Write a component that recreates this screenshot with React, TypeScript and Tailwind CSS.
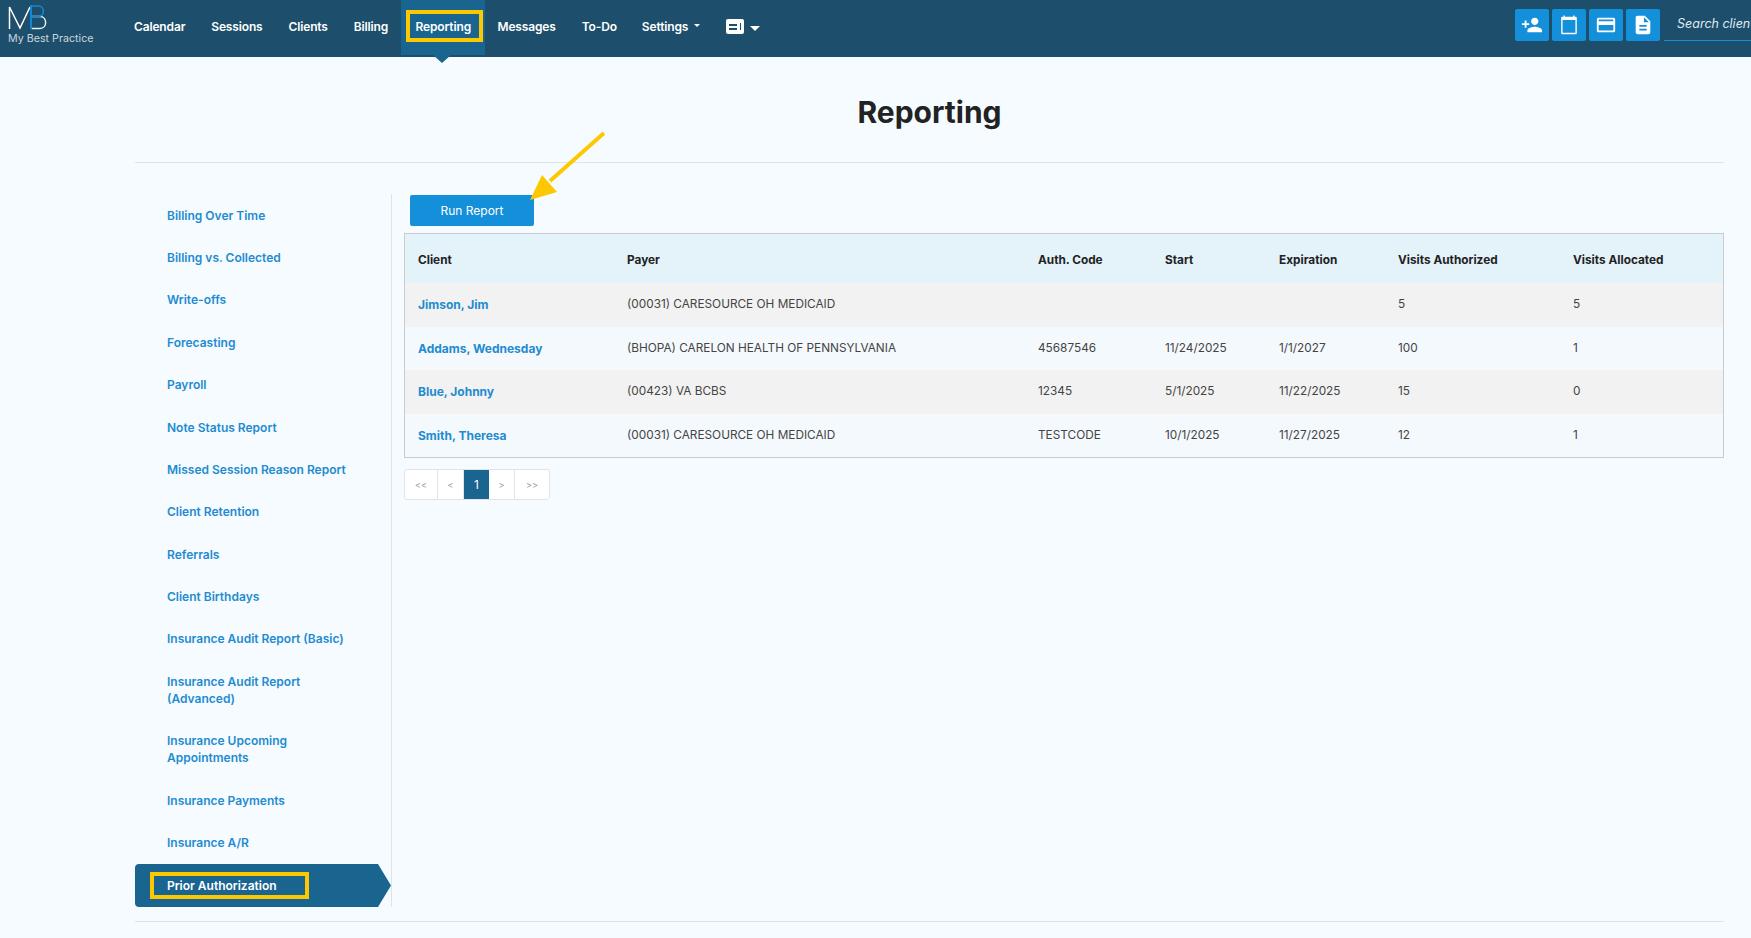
import React from "react";

const FONT = "font-['Inter','Open_Sans',sans-serif]";

const navLinks = ["Calendar", "Sessions", "Clients", "Billing", "Reporting", "Messages", "To-Do"];

const reports = [
  "Billing Over Time",
  "Billing vs. Collected",
  "Write-offs",
  "Forecasting",
  "Payroll",
  "Note Status Report",
  "Missed Session Reason Report",
  "Client Retention",
  "Referrals",
  "Client Birthdays",
  "Insurance Audit Report (Basic)",
  "Insurance Audit Report (Advanced)",
  "Insurance Upcoming Appointments",
  "Insurance Payments",
  "Insurance A/R",
];

const rows = [
  { client: "Jimson, Jim", payer: "(00031) CARESOURCE OH MEDICAID", code: "", start: "", exp: "", auth: "5", alloc: "5" },
  { client: "Addams, Wednesday", payer: "(BHOPA) CARELON HEALTH OF PENNSYLVANIA", code: "45687546", start: "11/24/2025", exp: "1/1/2027", auth: "100", alloc: "1" },
  { client: "Blue, Johnny", payer: "(00423) VA BCBS", code: "12345", start: "5/1/2025", exp: "11/22/2025", auth: "15", alloc: "0" },
  { client: "Smith, Theresa", payer: "(00031) CARESOURCE OH MEDICAID", code: "TESTCODE", start: "10/1/2025", exp: "11/27/2025", auth: "12", alloc: "1" },
];

const iconPaths = [
  "M15 12c2.21 0 4-1.79 4-4s-1.79-4-4-4-4 1.79-4 4 1.79 4 4 4zm-9-2V7H4v3H1v2h3v3h2v-3h3v-2H6zm9 4c-2.67 0-8 1.34-8 4v2h16v-2c0-2.66-5.33-4-8-4z",
  "M6 1.5h1.5V3h9V1.5H18V3h1.5c.6 0 1 .4 1 1v17c0 .6-.4 1-1 1h-15c-.6 0-1-.4-1-1V4c0-.6.4-1 1-1H6V1.5zM5 6.5V20.5h14V6.5H5z",
  "M20 4H4c-1.11 0-1.99.89-1.99 2L2 18c0 1.11.89 2 2 2h16c1.11 0 2-.89 2-2V6c0-1.11-.89-2-2-2zm0 14H4v-6h16v6zm0-10H4V6h16v2z",
  "M14 2H6c-1.1 0-1.99.9-1.99 2L4 20c0 1.1.89 2 1.99 2H18c1.1 0 2-.9 2-2V8l-6-6zm2 16H8v-2h8v2zm0-4H8v-2h8v2zm-3-5V3.5L18.5 9H13z",
];

function Logo() {
  return (
    <div className="flex w-[121px] flex-col pl-2 pt-[4px]">
      <svg width="40" height="27" viewBox="0 0 40 27" fill="none">
        <path d="M1.5 25V3L12 24L22 3" stroke="#ffffff" strokeWidth="1.5" />
        <path d="M24 12.5H32C39.5 12.5 39.5 24.5 32 24.5H23" stroke="#e7f2f8" strokeWidth="1.5" />
        <path d="M23 1V25" stroke="#1487d4" strokeWidth="2" />
        <path d="M23 2H30.5C37 2 37 12.5 30.5 12.5H23" stroke="#1487d4" strokeWidth="1.6" />
      </svg>
      <span className="mt-[1px] whitespace-nowrap text-[10.7px] leading-[13px] text-[#c9d6de]">My Best Practice</span>
    </div>
  );
}

function Nav() {
  return (
    <nav className="flex h-[57px] items-start overflow-hidden bg-[#1d4e6b]">
      <Logo />
      <ul className="flex h-[57px]">
        {navLinks.map((l) => (
          <li
            key={l}
            className={
              l === "Reporting"
                ? "relative mr-[-1px] flex h-[55px] items-center bg-[#1a6490] px-[14.5px] pb-[2px] text-[12px] font-semibold tracking-[-0.15px] text-white"
                : "flex h-[53px] items-center px-[13px] text-[12px] font-semibold tracking-[-0.15px] text-white"
            }
          >
            {l}
            {l === "Reporting" && (
              <div className="absolute left-[5px] right-[2px] top-[10px] h-[32px] border-[4px] border-[#fdc800]" />
            )}
          </li>
        ))}
        <li className="flex h-[53px] items-center gap-[6px] px-[12px] text-[12px] font-semibold tracking-[-0.15px] text-white">
          Settings
          <span className="mb-[3px] border-x-[3px] border-t-[3px] border-x-transparent border-t-white" />
        </li>
        <li className="flex h-[53px] items-center gap-[6px] pl-[14px]">
          <div className="flex h-[15px] w-[18px] items-center justify-between rounded-[2px] bg-white px-[3px]">
            <div className="flex flex-col gap-[2px]">
              <span className="block h-[2px] w-[8px] bg-[#1d4e6b]" />
              <span className="block h-[2px] w-[8px] bg-[#1d4e6b]" />
            </div>
            <span className="block h-[7px] w-[1px] bg-[#1d4e6b]" />
          </div>
          <span className="mt-[3px] border-x-[5px] border-t-[5px] border-x-transparent border-t-white" />
        </li>
      </ul>
      <div className="ml-auto flex items-start gap-[3px] pt-[9px]">
        {iconPaths.map((d) => (
          <button key={d} className="flex h-[32px] w-[34px] items-center justify-center rounded-[2px] bg-[#148fd9]">
            <svg width="22" height="22" viewBox="0 0 24 24" fill="#ffffff">
              <path d={d} />
            </svg>
          </button>
        ))}
        <div className="ml-[1px] h-[32px] w-[87px] overflow-hidden border-b border-[#148fd9] pl-[13px] text-[12.5px] leading-[30px] whitespace-nowrap text-[#dfeaf1] italic">
          Search clients
        </div>
      </div>
    </nav>
  );
}

function Sidebar() {
  return (
    <aside className="w-[257px] shrink-0 border-r border-[#dfe4e8]">
      <ul>
        {reports.map((r) => (
          <li key={r} className="py-[12.7px] pl-[32px] pr-[30px] text-[12px] leading-[17px] font-semibold text-[#1f8bd0]">
            {r}
          </li>
        ))}
        <li className="relative h-[43px] pl-[32px] text-[12px] leading-[43px] font-semibold text-white">
          <svg className="absolute inset-0 h-[43px] w-[256px]" viewBox="0 0 256 43">
            <path d="M4 0H243L256 21.5L243 43H4C1.5 43 0 41.5 0 39V4C0 1.5 1.5 0 4 0Z" fill="#1a6490" />
          </svg>
          <span className="relative">Prior Authorization</span>
          <div className="absolute left-[15px] top-[8px] h-[27px] w-[159px] border-[4px] border-[#fdc800]" />
        </li>
      </ul>
    </aside>
  );
}

function ReportTable() {
  const th = "px-[13px] pt-[4px] text-left text-[11.8px] font-bold text-[#222222]";
  const td = "px-[13px] text-[11.8px] text-[#444444]";
  return (
    <div className="ml-[12px] mt-[7px] border border-[#c8ccd0]">
      <table className="w-full table-fixed border-collapse">
        <thead>
          <tr className="h-[49px] bg-[#e4f2fa]">
            <th className={`${th} w-[209px]`}>Client</th>
            <th className={`${th} w-[411px]`}>Payer</th>
            <th className={`${th} w-[127px]`}>Auth. Code</th>
            <th className={`${th} w-[114px]`}>Start</th>
            <th className={`${th} w-[119px]`}>Expiration</th>
            <th className={`${th} w-[175px]`}>Visits Authorized</th>
            <th className={th}>Visits Allocated</th>
          </tr>
        </thead>
        <tbody>
          {rows.map((r, i) => (
            <tr key={r.client} className={i % 2 === 0 ? "h-[44px] bg-[#f2f2f2]" : "h-[43px] bg-[#f4f9fd]"}>
              <td className="px-[13px] text-[12px] font-bold text-[#1f8bd0]">{r.client}</td>
              <td className={td}>{r.payer}</td>
              <td className={td}>{r.code}</td>
              <td className={td}>{r.start}</td>
              <td className={td}>{r.exp}</td>
              <td className={td}>{r.auth}</td>
              <td className={td}>{r.alloc}</td>
            </tr>
          ))}
        </tbody>
      </table>
    </div>
  );
}

function Pagination() {
  const cell = "flex h-[29px] items-center justify-center border-r border-[#e0e4e8] bg-white text-[9px] text-[#999999]";
  return (
    <div className="ml-[12px] mt-[11px] flex w-fit overflow-hidden rounded-[3px] border border-[#e0e4e8]">
      <span className={`${cell} w-[33px]`}>&lt;&lt;</span>
      <span className={`${cell} w-[26px]`}>&lt;</span>
      <span className="flex h-[29px] w-[25px] items-center justify-center bg-[#1a6490] text-[12px] text-white">1</span>
      <span className={`${cell} w-[26px]`}>&gt;</span>
      <span className={`${cell} w-[34px] border-r-0`}>&gt;&gt;</span>
    </div>
  );
}

export default function App() {
  return (
    <div className={`${FONT} relative h-[938px] overflow-hidden bg-[#f5fbff]`}>
      <Nav />
      {/* little notch under the active tab */}
      <div className="absolute left-[433px] top-[55px] border-x-[9px] border-t-[8px] border-x-transparent border-t-[#1a6490]" />
      <main className="ml-[135px] mr-[27px]">
        <header className="h-[106px] border-b border-[#dfe4e8] pt-[37px] text-center">
          <h1 className="text-[30px] leading-[36px] font-bold text-[#222222]">Reporting</h1>
        </header>
        <div className="mt-[31px] flex h-[713px]">
          <Sidebar />
          <section className="min-w-0 flex-1 pt-[1px]">
            <button className="ml-[18px] h-[31px] w-[124px] rounded-[2px] bg-[#148fd9] text-[12px] text-white">Run Report</button>
            <ReportTable />
            <Pagination />
          </section>
        </div>
        <div className="mt-[14px] border-t border-[#dfe4e8]" />
      </main>
      <svg className="pointer-events-none absolute left-[525px] top-[130px]" width="80" height="75" viewBox="0 0 80 75">
        <path d="M79 3L25 51" stroke="#fdc800" strokeWidth="4" />
        <path d="M5 70L32 62L17 45Z" fill="#fdc800" />
      </svg>
    </div>
  );
}
